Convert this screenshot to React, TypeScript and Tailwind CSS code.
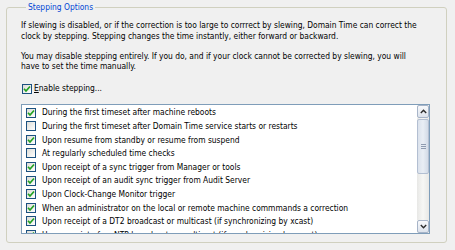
import React from "react";

const FONT = { fontFamily: '"DejaVu Sans Condensed", "Liberation Sans", sans-serif' };

function Check({ checked }: { checked: boolean }) {
  return (
    <span className="flex h-[10px] w-[10px] shrink-0 items-center justify-center border border-[#1c5180] bg-gradient-to-br from-[#dcdcd7] to-[#ffffff]">
      {checked && (
        <svg width="8" height="8" viewBox="0 0 8 8">
          <path d="M1 3.8 L3 6 L7 1.5" fill="none" stroke="#21a121" strokeWidth="1.7" />
        </svg>
      )}
    </span>
  );
}

const items: [boolean, string][] = [
  [true, "During the first timeset after machine reboots"],
  [false, "During the first timeset after Domain Time service starts or restarts"],
  [true, "Upon resume from standby or resume from suspend"],
  [false, "At regularly scheduled time checks"],
  [true, "Upon receipt of a sync trigger from Manager or tools"],
  [true, "Upon receipt of an audit sync trigger from Audit Server"],
  [true, "Upon Clock-Change Monitor trigger"],
  [true, "When an administrator on the local or remote machine commmands a correction"],
  [true, "Upon receipt of a DT2 broadcast or multicast (if synchronizing by xcast)"],
  [true, "Upon receipt of an NTP broadcast or multicast (if synchronizing by xcast)"],
];

export default function App() {
  return (
    <div className="h-[250px] w-[455px] overflow-hidden bg-[#f0f0f0] pl-[6px] pr-[8px] pt-[2px] text-[8.4px] leading-[10.3px] text-black" style={FONT}>
      <fieldset className="h-[241px] rounded-[3px] border border-[#d0d0bf] pl-[14px] pr-[16px]">
        <legend className="ml-[5px] px-[2px] text-[#0046d5]">Stepping Options</legend>
        <div className="pt-[8px]">
          <p>
            If slewing is disabled, or if the correction is too large to corrrect by slewing, Domain Time can correct the
            <br />
            clock by stepping. Stepping changes the time instantly, either forward or backward.
          </p>
          <p className="mt-[10px]">
            You may disable stepping entirely. If you do, and if your clock cannot be corrected by slewing, you will
            <br />
            have to set the time manually.
          </p>
          <label className="mt-[12px] flex items-center gap-[2px] pl-[1px]">
            <Check checked />
            <span>
              <span className="underline">E</span>nable stepping...
            </span>
          </label>
          <div className="mt-[10px] flex h-[130px] border border-[#7f9db9] bg-white">
            <div className="flex-1 overflow-hidden pl-[4px] pt-[1px]">
              {items.map(([c, t], i) => (
                <div key={i} className="flex h-[13.6px] items-center gap-[6px] whitespace-nowrap">
                  <Check checked={c} />
                  <span>{t}</span>
                </div>
              ))}
            </div>
            <div className="flex w-[12px] flex-col bg-[#f4f4f1]">
              <div className="flex h-[13px] items-center justify-center rounded-[2px] border border-[#a7b4c8] bg-gradient-to-b from-[#f8f9fb] to-[#dde3ec]">
                <svg width="7" height="5" viewBox="0 0 7 5">
                  <path d="M0.8 4 L3.5 1.3 L6.2 4" fill="none" stroke="#2b2b2b" strokeWidth="1.4" />
                </svg>
              </div>
              <div className="flex-1 bg-gradient-to-r from-[#e8e8e6] via-[#f7f7f5] to-[#e8e8e6] pt-[1px]">
                <div className="flex h-[55px] flex-col items-center justify-center gap-[1px] rounded-[2px] border border-[#b3bfd2] bg-gradient-to-r from-[#dbe2ec] via-[#e9eef5] to-[#d3dbe7]">
                  <span className="h-px w-[5px] bg-[#8f9bb0]" />
                  <span className="h-px w-[5px] bg-[#8f9bb0]" />
                  <span className="h-px w-[5px] bg-[#8f9bb0]" />
                </div>
              </div>
              <div className="flex h-[13px] items-center justify-center rounded-[2px] border border-[#a7b4c8] bg-gradient-to-b from-[#f8f9fb] to-[#dde3ec]">
                <svg width="7" height="5" viewBox="0 0 7 5">
                  <path d="M0.8 1 L3.5 3.7 L6.2 1" fill="none" stroke="#2b2b2b" strokeWidth="1.4" />
                </svg>
              </div>
            </div>
          </div>
        </div>
      </fieldset>
    </div>
  );
}
